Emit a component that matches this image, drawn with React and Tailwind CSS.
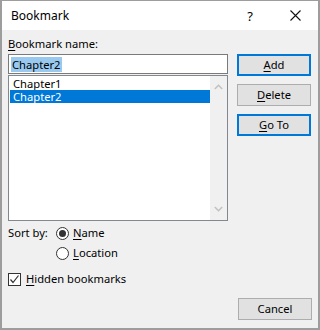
import React from "react";

const U = ({ children }) => <span className="underline underline-offset-[2px]">{children}</span>;

function Btn({ children, focus }) {
  return (
    <div
      className={
        "w-[74px] h-[22px] bg-[#e1e1e1] flex items-center justify-center leading-[16px] " +
        (focus ? "border-2 border-[#0078d7]" : "border border-[#adadad]")
      }
    >
      {children}
    </div>
  );
}

function Radio({ checked }) {
  return (
    <div className="w-[13px] h-[13px] rounded-full border border-[#333333] bg-white flex items-center justify-center">
      {checked && <div className="w-[7px] h-[7px] rounded-full bg-[#333333]" />}
    </div>
  );
}

export default function App() {
  return (
    <div
      className="w-[320px] h-[330px] bg-[#f0f0f0] border-2 border-t border-[#9d9d9d] flex flex-col text-[11.2px] text-black"
      style={{ fontFamily: '"Noto Sans", "Open Sans", sans-serif' }}
    >
      {/* title bar */}
      <div className="h-[29px] bg-white flex items-center pl-[9px] leading-[16px]">
        <span className="text-[12px]">Bookmark</span>
        <span className="ml-auto mr-[37px] text-[13px]">?</span>
        <svg width="11" height="11" viewBox="0 0 11 11" className="mr-[17px]">
          <path d="M0.5 0.5 L10.5 10.5 M10.5 0.5 L0.5 10.5" stroke="#111" strokeWidth="1.1" fill="none" />
        </svg>
      </div>

      {/* body */}
      <div className="flex-1 flex flex-col pl-[6px] pt-[6px] pb-[8px]">
        <div className="flex">
          <div className="w-[220px] flex flex-col">
            <div className="leading-[16px] h-[16px]">
              <U>B</U>ookmark name:
            </div>
            <div className="mt-[2px] h-[20px] bg-white border border-[#7a7a7a] flex items-center pl-[2px]">
              <span className="bg-[#99c9ef] px-[1px] leading-[15px]">Chapter2</span>
            </div>
            <div className="mt-[1px] h-[146px] bg-white border border-[#828790] flex">
              <div className="flex-1 flex flex-col pt-[1px] pl-[1px]">
                <div className="h-[13px] leading-[13px] pl-[3px] overflow-hidden">Chapter1</div>
                <div className="h-[13px] leading-[13px] pl-[3px] bg-[#0078d7] text-white overflow-hidden">Chapter2</div>
              </div>
              <div className="w-[17px] bg-[#f0f0f0] flex flex-col items-center justify-between py-[8px]">
                <svg width="9" height="6" viewBox="0 0 9 6">
                  <path d="M0.8 5 L4.5 1.3 L8.2 5" stroke="#c2c2c2" strokeWidth="1.6" fill="none" />
                </svg>
                <svg width="9" height="6" viewBox="0 0 9 6">
                  <path d="M0.8 1 L4.5 4.7 L8.2 1" stroke="#c2c2c2" strokeWidth="1.6" fill="none" />
                </svg>
              </div>
            </div>
          </div>
          <div className="ml-[9px] mt-[18px] flex flex-col gap-[8px]">
            <Btn focus>
              <U>A</U>dd
            </Btn>
            <Btn>
              <U>D</U>elete
            </Btn>
            <Btn focus>
              <U>G</U>o To
            </Btn>
          </div>
        </div>

        <div className="mt-[3px] flex items-center h-[18px] leading-[16px]">
          <span className="w-[48px]">Sort by:</span>
          <Radio checked />
          <span className="ml-[4px]">
            <U>N</U>ame
          </span>
        </div>
        <div className="mt-[2px] flex items-center h-[18px] leading-[16px] pl-[48px]">
          <Radio />
          <span className="ml-[4px]">
            <U>L</U>ocation
          </span>
        </div>

        <div className="mt-[8px] flex items-center h-[18px] leading-[16px]">
          <div className="w-[13px] h-[13px] border border-[#333333] bg-white flex items-center justify-center">
            <svg width="11" height="11" viewBox="0 0 11 11">
              <path d="M1.5 5.5 L4 8.5 L9.5 1.5" stroke="#333" strokeWidth="1.2" fill="none" />
            </svg>
          </div>
          <span className="ml-[5px]">
            <U>H</U>idden bookmarks
          </span>
        </div>

        <div className="mt-auto flex justify-end pr-[6px]">
          <Btn>Cancel</Btn>
        </div>
      </div>
    </div>
  );
}
